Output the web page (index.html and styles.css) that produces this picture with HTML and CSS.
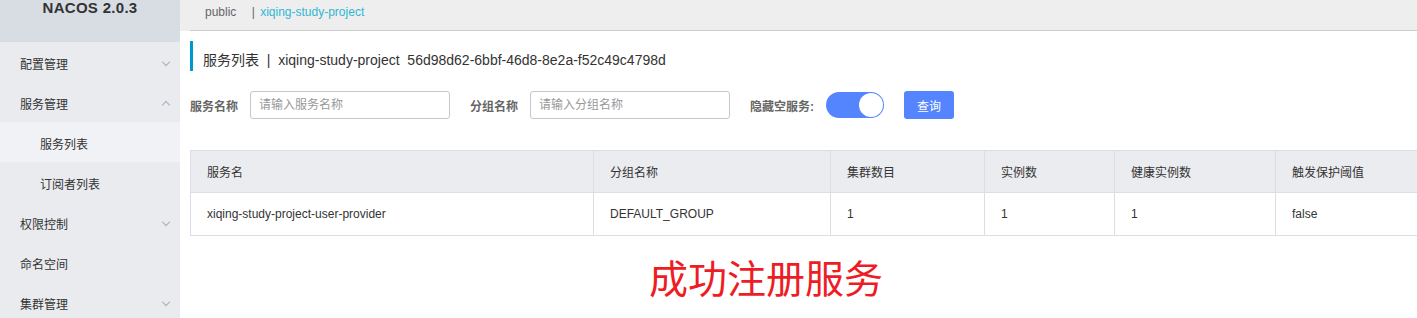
FILE: index.html
```html
<!DOCTYPE html>
<html>
<head>
	<meta charset="utf-8">
	<title>Nacos - 服务列表</title>
	<link rel="stylesheet" href="styles.css">
</head>
<body>

<aside class="sidebar">
	<div class="logo">NACOS 2.0.3</div>
	<ul class="menu">
		<li class="menu-item">配置管理 <span class="chevron down"></span></li>
		<li class="menu-item">服务管理 <span class="chevron up"></span></li>
		<li class="menu-sub active">服务列表</li>
		<li class="menu-sub">订阅者列表</li>
		<li class="menu-item">权限控制 <span class="chevron down"></span></li>
		<li class="menu-item">命名空间</li>
		<li class="menu-item">集群管理 <span class="chevron down"></span></li>
	</ul>
</aside>

<main class="main">
	<div class="topbar">
		<div class="ns-list">
			<span class="ns">public</span>
			<span class="ns-sep">|</span>
			<span class="ns current">xiqing-study-project</span>
		</div>
	</div>

	<div class="content">
		<h1 class="page-title">服务列表&nbsp; | &nbsp;xiqing-study-project&nbsp; 56d98d62-6bbf-46d8-8e2a-f52c49c4798d</h1>

		<form class="search">
			<label class="field-label">服务名称</label>
			<input class="field-input" type="text" placeholder="请输入服务名称">
			<label class="field-label">分组名称</label>
			<input class="field-input" type="text" placeholder="请输入分组名称">
			<label class="field-label">隐藏空服务:</label>
			<span class="switch"><span class="knob"></span></span>
			<button class="btn-primary" type="button">查询</button>
		</form>

		<div class="table-wrap">
			<table class="table">
				<colgroup>
					<col style="width: 403px">
					<col style="width: 237px">
					<col style="width: 154px">
					<col style="width: 130px">
					<col style="width: 161px">
					<col style="width: 160px">
				</colgroup>
				<thead>
					<tr>
						<th>服务名</th>
						<th>分组名称</th>
						<th>集群数目</th>
						<th>实例数</th>
						<th>健康实例数</th>
						<th>触发保护阈值</th>
					</tr>
				</thead>
				<tbody>
					<tr>
						<td>xiqing-study-project-user-provider</td>
						<td>DEFAULT_GROUP</td>
						<td>1</td>
						<td>1</td>
						<td>1</td>
						<td>false</td>
					</tr>
				</tbody>
			</table>
		</div>

		<p class="note">成功注册服务</p>
	</div>
</main>

</body>
</html>
```

FILE: styles.css
```css
* {
	box-sizing: border-box;
}

html, body {
	margin: 0;
	height: 100%;
}

body {
	display: flex;
	font-family: "Liberation Sans", "Noto Sans CJK SC", sans-serif;
	font-size: 12px;
	color: #333;
	background: #fff;
	overflow: hidden;
}

/* sidebar */

.sidebar {
	flex: 0 0 180px;
	background-color: #e9ebef;
}

.logo {
	height: 42px;
	background-color: #d8dce3;
	text-align: center;
	font-size: 15px;
	font-weight: bold;
	color: #333;
	line-height: 16px;
	letter-spacing: 0.3px;
}

.menu {
	list-style: none;
	margin: 0;
	padding: 0;
}

.menu li {
	position: relative;
	height: 40px;
	padding-top: 6px;
	line-height: 34px;
	font-size: 12px;
	color: #333;
}

.menu-item {
	padding-left: 20px;
}

.menu-sub {
	padding-left: 40px;
}

.menu-sub.active {
	background-color: #f1f2f6;
}

.chevron {
	position: absolute;
	right: 11px;
	top: 17px;
	width: 6px;
	height: 6px;
	border-right: 1px solid #a9adb6;
	border-bottom: 1px solid #a9adb6;
}

.chevron.down {
	transform: rotate(45deg);
}

.chevron.up {
	top: 20px;
	transform: rotate(-135deg);
}

/* main */

.main {
	flex: 1;
	min-width: 0;
	overflow: hidden;
}

.topbar {
	height: 31px;
	background-color: #eeeeee;
	padding-left: 10px;
}

.ns-list {
	height: 31px;
	border-bottom: 1px solid #cccccc;
	padding-left: 15px;
	line-height: 24px;
	font-size: 12px;
}

.ns {
	color: #666;
}

.ns-sep {
	color: #666;
	margin-left: 12px;
	margin-right: 2px;
}

.ns.current {
	color: #2fb8d3;
}

.content {
	padding: 10px 0 0 10px;
}

.page-title {
	margin: 0;
	height: 30px;
	padding-top: 4px;
	line-height: 30px;
	border-left: 3px solid #0097cf;
	padding-left: 10px;
	font-size: 14px;
	font-weight: normal;
	color: #333;
	white-space: nowrap;
}

.search {
	display: flex;
	align-items: center;
	height: 28px;
	margin-top: 20px;
}

.field-label {
	font-weight: bold;
	color: #666;
	margin-right: 12px;
}

.field-input {
	width: 200px;
	height: 28px;
	border: 1px solid #c4c6cf;
	border-radius: 3px;
	padding: 0 8px;
	font: inherit;
	margin-right: 20px;
	outline: none;
}

.field-input::placeholder {
	color: #999;
}

.switch {
	position: relative;
	display: inline-block;
	width: 58px;
	height: 26px;
	border-radius: 13px;
	background-color: #5584ff;
	margin-right: 20px;
}

.knob {
	position: absolute;
	right: 1px;
	top: 1px;
	width: 24px;
	height: 24px;
	border-radius: 50%;
	background: #fff;
}

.btn-primary {
	width: 50px;
	height: 28px;
	border: 0;
	border-radius: 3px;
	background-color: #5584ff;
	color: #fff;
	font: inherit;
	font-size: 12px;
}

/* table */

.table-wrap {
	margin-top: 31px;
}

.table {
	border-collapse: collapse;
	table-layout: fixed;
	width: 1245px;
}

.table th,
.table td {
	border: 1px solid #dcdee3;
	padding: 0 16px;
	text-align: left;
	font-weight: normal;
	color: #333;
	white-space: nowrap;
}

.table th {
	height: 42px;
	background-color: #ebecf0;
}

.table td {
	height: 43px;
}

.note {
	margin: 15px 0 0 459px;
	font-family: "Noto Sans CJK SC", sans-serif;
	font-size: 39px;
	line-height: 50px;
	color: #ee1c24;
}
```
